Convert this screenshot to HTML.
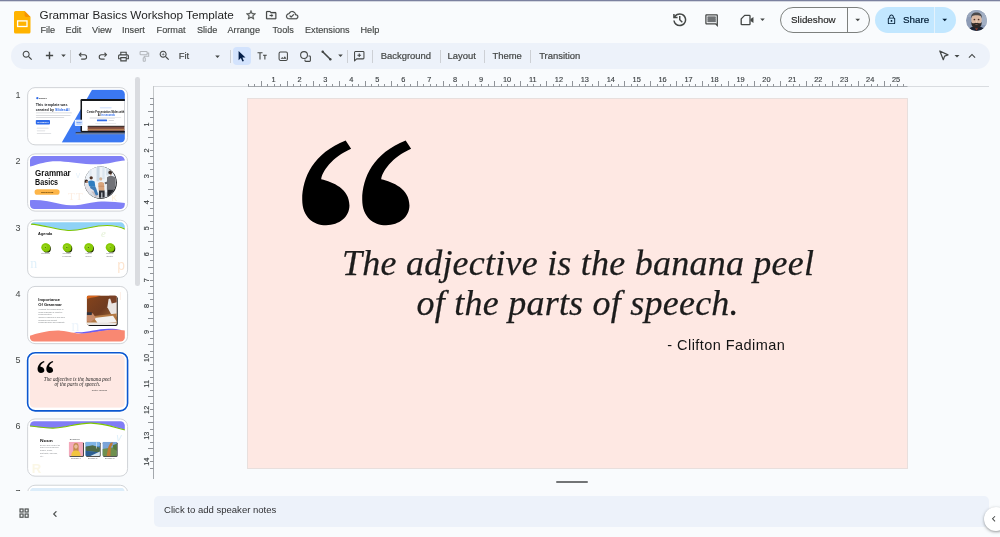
<!DOCTYPE html>
<html lang="en">
<head>
<meta charset="utf-8">
<title>Grammar Basics Workshop Template - Google Slides</title>
<style>
*{box-sizing:border-box;margin:0;padding:0}
html,body{width:1000px;height:537px;overflow:hidden}
body{position:relative;background:#f9fbfd;will-change:transform;font-family:"Liberation Sans",Arial,sans-serif;color:#1f1f1f}
.abs{position:absolute}
.t{position:absolute;white-space:nowrap;line-height:1}
#topline{left:0;top:0;width:1000px;height:2px;background:linear-gradient(#7b819f 0,#7b819f 50%,#d4d7e1 50%,#d4d7e1 100%)}
#title{left:39.5px;top:8.8px;font-size:11.72px;color:#1f1f1f;letter-spacing:.02px}
.menu{top:26.4px;font-size:9.15px;color:#444746;-webkit-text-stroke:.15px #444746}
#toolbar{left:11px;top:43px;width:978.5px;height:25.5px;border-radius:13px;background:#edf2fa}
.tbt{top:51.3px;font-size:9.45px;color:#444746;-webkit-text-stroke:.2px #444746}
.sep{position:absolute;top:49.5px;width:1px;height:13px;background:#cdd0d5}
svg{position:absolute;overflow:visible}
.num{font-size:9px;color:#444746;left:14px;width:8px;text-align:center}
#slide{left:247px;top:98px;width:661px;height:371px;background:#fee8e3;border:1px solid #e8dfdd}
.q{font-family:"Liberation Serif",serif;font-style:italic;font-size:36px;color:#1c1c1c;letter-spacing:.23px;-webkit-text-stroke:.25px #1c1c1c}
.qm{font-family:"Noto Serif CJK SC","Liberation Serif",serif;font-weight:900;font-size:248.2px;color:#000;transform:scaleX(1.0945);transform-origin:0 0}
#notes{left:154px;top:496px;width:834.5px;height:31px;border-radius:5px;background:#edf2fa}
</style>
</head>
<body>
<div id="topline" class="abs"></div>
<!-- header -->
<svg id="logo" style="left:14px;top:10.5px" width="16.5" height="22.5" viewBox="0 0 16.5 22.5"><path d="M1.600 0H10.600L16.500 5.900V20.900a1.600 1.600 0 0 1-1.600 1.600H1.600A1.600 1.600 0 0 1 0 20.900V1.600A1.600 1.600 0 0 1 1.600 0z" fill="#ffb300"/><path d="M10.600 0L16.500 5.900H12.200a1.600 1.600 0 0 1-1.600-1.600z" fill="#f59300"/><rect x="3.600" y="9.900" width="9.400" height="5.600" fill="none" stroke="#fff" stroke-width="1.300"/></svg>
<div id="title" class="t">Grammar Basics Workshop Template</div>
<svg style="left:244.50px;top:8.90px" width="12" height="12" viewBox="0 0 24 24"><path d="M22 9.240l-7.190-.62L12 2 9.190 8.630 2 9.240l5.460 4.730L5.820 21 12 17.270 18.180 21l-1.630-7.030L22 9.240zM12 15.400l-3.760 2.270 1-4.280-3.320-2.880 4.380-.38L12 6.100l1.710 4.040 4.380.38-3.320 2.880 1 4.280L12 15.400z" fill="#444746" stroke="#444746" stroke-width=".5"/></svg>
<svg style="left:264.80px;top:8.90px" width="12.4" height="12.4" viewBox="0 0 24 24"><path d="M20 6h-8l-2-2H4c-1.100 0-1.990.9-1.990 2L2 18c0 1.100.9 2 2 2h16c1.100 0 2-.9 2-2V8c0-1.100-.9-2-2-2zm0 12H4V6h5.170l2 2H20v10zm-7.500-2.500v-2H9v-2h3.500v-2l3.500 3-3.500 3z" fill="#444746" stroke="#444746" stroke-width=".4"/></svg>
<svg style="left:285.60px;top:9.10px" width="12.4" height="12.4" viewBox="0 0 24 24"><path d="M19.350 10.040C18.670 6.590 15.640 4 12 4 9.110 4 6.600 5.640 5.350 8.040 2.340 8.360 0 10.910 0 14c0 3.310 2.690 6 6 6h13c2.760 0 5-2.240 5-5 0-2.640-2.050-4.780-4.650-4.960zM19 18H6c-2.210 0-4-1.790-4-4 0-2.050 1.530-3.760 3.560-3.970l1.070-.11.5-.95C8.080 7.140 9.940 6 12 6c2.620 0 4.880 1.860 5.390 4.430l.3 1.500 1.530.11c1.560.1 2.780 1.410 2.780 2.960 0 1.650-1.350 3-3 3zm-9-3.820l-2.090-2.090L6.500 13.500 10 17l6.010-6.010-1.410-1.410z" fill="#444746" stroke="#444746" stroke-width=".3"/></svg>
<div class="t menu" style="left:40.4px">File</div>
<div class="t menu" style="left:65.6px">Edit</div>
<div class="t menu" style="left:92px">View</div>
<div class="t menu" style="left:122px">Insert</div>
<div class="t menu" style="left:156.6px">Format</div>
<div class="t menu" style="left:197px">Slide</div>
<div class="t menu" style="left:227.5px">Arrange</div>
<div class="t menu" style="left:272.5px">Tools</div>
<div class="t menu" style="left:305px">Extensions</div>
<div class="t menu" style="left:360.5px">Help</div>
<svg style="left:670.55px;top:11.15px" width="17.5" height="17.5" viewBox="0 0 24 24"><path d="M12 21q-3.45 0-6.012-2.287T3.05 13H5.1q.35 2.6 2.313 4.3T12 19q2.925 0 4.963-2.037T19 12t-2.037-4.963T12 5q-1.725 0-3.225.8T6.25 8H9v2H3V4h2v2.350q1.275-1.600 3.113-2.475T12 3q1.875 0 3.513.713t2.850 1.924 1.925 2.850T21 12t-.712 3.513-1.925 2.850-2.850 1.925T12 21m2.800-4.800L11 12.400V7h2v4.600l3.200 3.200z" fill="#444746"/></svg>
<svg style="left:704.00px;top:12.70px" width="15.2" height="15.2" viewBox="0 0 24 24"><path d="M21.990 4c0-1.100-.89-2-1.990-2H4c-1.100 0-2 .9-2 2v12c0 1.100.9 2 2 2h14l4 4-.010-18zM20 4v13.170L18.830 16H4V4h16zM6 12h12v2H6zm0-3h12v2H6zm0-3h12v2H6z" fill="#444746"/><rect x="5.500" y="5.500" width="13" height="9" fill="#6f7275"/></svg>
<svg style="left:738.60px;top:12.40px" width="16" height="16" viewBox="0 0 24 24"><path d="M8.500 5.100H15.500a1 1 0 0 1 1 1V17.900a1 1 0 0 1-1 1H4.300a1 1 0 0 1-1-1V10.300z" fill="none" stroke="#444746" stroke-width="2" stroke-linejoin="round"/><path d="M17.300 10.600L21.700 7.400v9.200l-4.400-3.200z" fill="#444746"/></svg>
<svg style="left:756.90px;top:14.40px" width="11" height="11" viewBox="0 0 24 24"><path d="M7 10l5 5 5-5z" fill="#444746"/></svg>
<div class="abs" style="left:780px;top:7px;width:89.5px;height:26px;border:1px solid #7d807e;border-radius:14px"></div>
<div class="abs" style="left:846.5px;top:7.5px;width:1px;height:25px;background:#7d807e"></div>
<div class="t" style="left:791px;top:15.3px;font-size:9.8px;color:#1f1f1f;-webkit-text-stroke:.15px #1f1f1f">Slideshow</div>
<svg style="left:851.55px;top:14.25px" width="11.5" height="11.5" viewBox="0 0 24 24"><path d="M7 10l5 5 5-5z" fill="#444746"/></svg>
<div class="abs" style="left:875px;top:7px;width:80.5px;height:26px;border-radius:13px;background:#c2e7ff"></div>
<div class="abs" style="left:934px;top:7px;width:1px;height:26px;background:#e4f2fc"></div>
<svg style="left:886.00px;top:14.30px" width="11" height="11" viewBox="0 0 24 24"><path d="M18 8h-1V6c0-2.760-2.240-5-5-5S7 3.240 7 6v2H6c-1.100 0-2 .9-2 2v10c0 1.100.9 2 2 2h12c1.100 0 2-.9 2-2V10c0-1.100-.9-2-2-2zM9 6c0-1.660 1.340-3 3-3s3 1.340 3 3v2H9V6zm9 14H6V10h12v10zm-6-3c1.100 0 2-.9 2-2s-.9-2-2-2-2 .9-2 2 .9 2 2 2z" fill="#001d35"/></svg>
<div class="t" style="left:903px;top:15.3px;font-size:9.8px;color:#001d35;-webkit-text-stroke:.2px #001d35">Share</div>
<svg style="left:938.85px;top:14.25px" width="11.5" height="11.5" viewBox="0 0 24 24"><path d="M7 10l5 5 5-5z" fill="#001d35"/></svg>
<svg style="left:966px;top:9.7px" width="21" height="21" viewBox="0 0 21 21"><defs><clipPath id="avc"><circle cx="10.5" cy="10.5" r="10.5"/></clipPath></defs><circle cx="10.5" cy="10.5" r="11.2" fill="#fff"/><g clip-path="url(#avc)"><rect width="21" height="21" fill="#8e9cb6"/><rect x="0" y="0" width="21" height="7" fill="#9aa7bd"/><rect x="14" y="3" width="7" height="12" fill="#a3afc3"/><path d="M2.500 21c.5-3.300 3-4.400 8-4.400s7.500 1.100 8 4.400z" fill="#1b2334"/><path d="M9 17.800h3l-1.500 3.200z" fill="#8a3a2a"/><ellipse cx="10.500" cy="10" rx="5.200" ry="6.400" fill="#dbb9a2"/><path d="M5 8.600c-.4-4.400 2.300-6.200 5.500-6.200s5.900 1.800 5.500 6.200c-.5-2.100-1.300-3.300-5.500-3.300s-5 1.200-5.500 3.300z" fill="#4a494b"/><path d="M5.300 12c.5 1.100 1.400 1.500 2.600 1.300 1.200-.7 4-.7 5.200 0 1.200.2 2.100-.2 2.600-1.300.2 3.700-1.600 6.200-5.200 6.200s-5.400-2.500-5.200-6.200z" fill="#2e2826"/><path d="M8.800 14.300q1.700-.5 3.400 0-.3.700-1.700.7t-1.700-.7z" fill="#7d5a50"/><circle cx="8.400" cy="9.500" r=".85" fill="#4a2e26"/><circle cx="12.600" cy="9.500" r=".85" fill="#4a2e26"/><path d="M10 10.500h1v2.200h-1z" fill="#e8cdb8"/></g></svg>
<!-- toolbar -->
<div id="toolbar" class="abs"></div>
<svg style="left:21.30px;top:49.30px" width="13" height="13" viewBox="0 0 24 24"><path d="M15.5 14h-.79l-.28-.27C15.41 12.59 16 11.11 16 9.5 16 5.91 13.09 3 9.5 3S3 5.91 3 9.5 5.91 16 9.5 16c1.61 0 3.09-.59 4.23-1.57l.27.28v.79l5 4.99L20.49 19l-4.99-5zm-6 0C7.01 14 5 11.99 5 9.5S7.01 5 9.5 5 14 7.01 14 9.5 11.99 14 9.5 14z" fill="#444746"/></svg>
<svg style="left:43.00px;top:49.30px" width="13" height="13" viewBox="0 0 24 24"><path d="M12 5.300V18.700M5.300 12H18.700" stroke="#444746" stroke-width="2.600" fill="none"/></svg>
<svg style="left:58.20px;top:50.20px" width="11" height="11" viewBox="0 0 24 24"><path d="M7 10l5 5 5-5z" fill="#444746"/></svg>
<svg style="left:77.20px;top:50.30px" width="11.8" height="11.8" viewBox="0 0 24 24"><path d="M5.500 9.500H15a4.500 4.500 0 0 1 0 9H8.500" fill="none" stroke="#444746" stroke-width="2.200"/><path d="M8.700 5.600L4.800 9.500l3.900 3.900" fill="none" stroke="#444746" stroke-width="2.200"/></svg>
<svg style="left:96.80px;top:50.30px" width="11.8" height="11.8" viewBox="0 0 24 24"><g transform="translate(24 0) scale(-1 1)"><path d="M5.500 9.500H15a4.500 4.500 0 0 1 0 9H8.500" fill="none" stroke="#444746" stroke-width="2.200"/><path d="M8.700 5.600L4.800 9.500l3.900 3.900" fill="none" stroke="#444746" stroke-width="2.200"/></g></svg>
<svg style="left:117.20px;top:49.60px" width="13" height="13" viewBox="0 0 24 24"><path d="M19 8h-1V3H6v5H5c-1.66 0-3 1.34-3 3v6h4v4h12v-4h4v-6c0-1.66-1.34-3-3-3zM8 5h8v3H8V5zm8 14H8v-4h8v4zm4-4h-2v-2H6v2H4v-4c0-.55.45-1 1-1h14c.55 0 1 .45 1 1v4zM18 10.500a1 1 0 1 0 0 2 1 1 0 0 0 0-2z" fill="#444746"/></svg>
<svg style="left:137.75px;top:50.05px" width="12.5" height="12.5" viewBox="0 0 24 24"><rect x="4" y="3" width="13.500" height="6" rx="1.500" fill="none" stroke="#b3b7bc" stroke-width="2"/><path d="M17.500 6H20.500V12H12V15" fill="none" stroke="#b3b7bc" stroke-width="2"/><rect x="10" y="15" width="4" height="6.500" rx="1" fill="none" stroke="#b3b7bc" stroke-width="2"/></svg>
<svg style="left:158.30px;top:49.40px" width="13" height="13" viewBox="0 0 24 24"><path d="M15.5 14h-.79l-.28-.27C15.41 12.59 16 11.11 16 9.5 16 5.91 13.09 3 9.5 3S3 5.91 3 9.5 5.91 16 9.5 16c1.61 0 3.09-.59 4.23-1.57l.27.28v.79l5 4.99L20.49 19l-4.99-5zm-6 0C7.01 14 5 11.99 5 9.5S7.01 5 9.5 5 14 7.01 14 9.5 11.99 14 9.5 14zm.5-7H9v2H7v1h2v2h1v-2h2V9h-2z" fill="#444746"/></svg>
<div class="t tbt" style="left:178.7px">Fit</div>
<svg style="left:212.20px;top:50.50px" width="11" height="11" viewBox="0 0 24 24"><path d="M7 10l5 5 5-5z" fill="#444746"/></svg>
<div class="abs" style="left:232.5px;top:46.5px;width:18.5px;height:18.5px;border-radius:4px;background:#d3e3fd"></div>
<svg style="left:235.55px;top:49.95px" width="12.5" height="12.5" viewBox="0 0 24 24"><path d="M5 2V19.500L9.300 15.400 12.300 22.300 15.200 21 12.200 14.300H18.200Z" fill="#041e49"/></svg>
<svg style="left:255.80px;top:50.20px" width="12" height="12" viewBox="0 0 24 24"><path d="M3 5.500H13M8 5.500V19M14 10.500H21.500M17.750 10.500V19" fill="none" stroke="#444746" stroke-width="2.200"/></svg>
<svg style="left:276.75px;top:49.75px" width="12.5" height="12.5" viewBox="0 0 24 24"><rect x="4" y="4" width="16" height="16" rx="2.500" fill="none" stroke="#444746" stroke-width="2"/><path d="M7 17l3-3.800 2.100 2.600 3-3.900L18.200 17z" fill="#444746"/></svg>
<svg style="left:298.50px;top:49.70px" width="13" height="13" viewBox="0 0 24 24"><circle cx="9.300" cy="9.300" r="6.300" fill="none" stroke="#444746" stroke-width="2"/><path d="M17.500 11h2a1.500 1.500 0 0 1 1.500 1.500v7a1.500 1.500 0 0 1-1.500 1.500h-7a1.500 1.500 0 0 1-1.500-1.500V17.500" fill="none" stroke="#444746" stroke-width="2"/></svg>
<svg style="left:319.50px;top:49.40px" width="13" height="13" viewBox="0 0 24 24"><path d="M5 5L19 19" stroke="#444746" stroke-width="3" stroke-linecap="round"/><circle cx="5" cy="5" r="2.300" fill="#444746"/><circle cx="19" cy="19" r="2.300" fill="#444746"/></svg>
<svg style="left:334.50px;top:49.90px" width="11" height="11" viewBox="0 0 24 24"><path d="M7 10l5 5 5-5z" fill="#444746"/></svg>
<svg style="left:353.25px;top:50.05px" width="12.5" height="12.5" viewBox="0 0 24 24"><path d="M3 4.500a1.500 1.500 0 0 1 1.500-1.500h15a1.500 1.500 0 0 1 1.500 1.500v11a1.500 1.500 0 0 1-1.500 1.500H7l-4 4z" fill="none" stroke="#444746" stroke-width="2" stroke-linejoin="round"/><path d="M12 6.500v7M8.500 10h7" stroke="#444746" stroke-width="2.200" fill="none"/></svg>
<div class="t tbt" style="left:380.7px">Background</div>
<div class="t tbt" style="left:447.5px">Layout</div>
<div class="t tbt" style="left:492.5px">Theme</div>
<div class="t tbt" style="left:539.2px">Transition</div>
<div class="sep" style="left:70px"></div>
<div class="sep" style="left:229.5px"></div>
<div class="sep" style="left:346.5px"></div>
<div class="sep" style="left:372px"></div>
<div class="sep" style="left:440px"></div>
<div class="sep" style="left:483.7px"></div>
<div class="sep" style="left:530px"></div>
<svg style="left:936.95px;top:49.25px" width="13.5" height="13.5" viewBox="0 0 24 24"><path d="M5 3.500l14.500 7-6 2.200-2.300 6.300z" fill="none" stroke="#444746" stroke-width="2.200" stroke-linejoin="round"/></svg>
<svg style="left:950.90px;top:49.90px" width="12" height="12" viewBox="0 0 24 24"><path d="M7 10l5 5 5-5z" fill="#444746"/></svg>
<svg style="left:964.50px;top:48.80px" width="14" height="14" viewBox="0 0 24 24"><path d="M12 8l-6 6 1.410 1.410L12 10.830l4.590 4.580L18 14z" fill="#444746"/></svg>
<!-- filmstrip -->
<svg id="film" style="left:0;top:76px;overflow:hidden" width="142" height="414.9" viewBox="0 76 142 414.9" font-family="Liberation Sans, sans-serif">
<text x="18" y="98.03" font-size="9" fill="#444746" text-anchor="middle">1</text>
<rect x="27.63" y="87.63" width="99.95" height="57.2" rx="7.4" fill="#fff" stroke="#d0d3d7" stroke-width="1"/>
<clipPath id="tc1"><rect x="29.9" y="89.83" width="94.9" height="52.9" rx="4.4"/></clipPath><g clip-path="url(#tc1)"><rect x="29.9" y="89.83" width="94.9" height="52.9" fill="#fff"/><g transform="translate(20 82) scale(0.12658)"><path d="M570 60H800Q832 60 832 92V445Q832 477 800 477H330Z" fill="#3b78f2"/><rect x="478" y="134" width="380" height="262" rx="10" fill="#15171a"/><rect x="490" y="150" width="360" height="236" fill="#fff"/><rect x="440" y="397" width="420" height="9" fill="#2b2d31"/><rect x="440" y="406" width="420" height="7" fill="#8d9096"/><rect x="535" y="350" width="290" height="36" fill="#7d4a3c"/><rect x="535" y="346" width="290" height="8" fill="#2d2320"/><rect x="535" y="370" width="290" height="8" fill="#c08a5a"/><rect x="630" y="198" width="95" height="12" rx="6" fill="#dbe7fd"/><text x="676" y="242" font-size="21" font-weight="bold" text-anchor="middle" fill="#111" textLength="296" lengthAdjust="spacingAndGlyphs">Create Presentation Slides with</text><text x="615" y="266" font-size="21" font-weight="bold" fill="#111">AI <tspan fill="#2f6bea">in seconds</tspan></text><rect x="550" y="276.0" width="250" height="4" rx="2.0" fill="#d5d7db"/><rect x="550" y="286.0" width="200" height="4" rx="2.0" fill="#d5d7db"/><rect x="608" y="297" width="80" height="14" rx="3" fill="#2f6bea"/><rect x="700" y="301" width="42" height="5" rx="2" fill="#c9ccd1"/><rect x="595" y="325.0" width="165" height="4" rx="2.0" fill="#d5d7db"/><rect x="433" y="298" width="66" height="50" rx="9" fill="#fff"/><rect x="438" y="303" width="56" height="40" rx="6" fill="#cfe0fc"/><text x="466" y="322" font-size="14" font-weight="bold" text-anchor="middle" fill="#2f6bea">Slides</text><rect x="450" y="329" width="32" height="5" rx="2" fill="#8fb2f4"/><circle cx="137" cy="128" r="9" fill="#2f6bea"/><text x="150" y="134" font-size="16" font-weight="bold" fill="#222">SlidesAI</text><text x="125" y="188" font-size="31" font-weight="bold" fill="#1d1f23" textLength="250" lengthAdjust="spacingAndGlyphs">This template was</text><text x="125" y="227" font-size="31" font-weight="bold" fill="#1d1f23" textLength="266" lengthAdjust="spacingAndGlyphs">created by <tspan fill="#2f6bea">SlidesAI</tspan></text><rect x="125" y="241.0" width="285" height="6" rx="3.0" fill="#cfd1d5"/><rect x="125" y="260.0" width="275" height="6" rx="3.0" fill="#cfd1d5"/><rect x="125" y="278.0" width="225" height="6" rx="3.0" fill="#cfd1d5"/><rect x="125" y="300" width="112" height="35" rx="7" fill="#2f6bea"/><text x="181" y="324" font-size="17" font-weight="bold" fill="#fff" text-anchor="middle">by SlidesAI</text><rect x="132" y="362.0" width="95" height="6" rx="3.0" fill="#d6d8dc"/><rect x="132" y="383.0" width="68" height="6" rx="3.0" fill="#d6d8dc"/><rect x="132" y="405.0" width="115" height="6" rx="3.0" fill="#d6d8dc"/></g></g>
<text x="18" y="164.30" font-size="9" fill="#444746" text-anchor="middle">2</text>
<rect x="27.63" y="153.90" width="99.95" height="57.2" rx="7.4" fill="#fff" stroke="#d0d3d7" stroke-width="1"/>
<clipPath id="tc2"><rect x="29.9" y="156.10" width="94.9" height="52.9" rx="4.4"/></clipPath><g clip-path="url(#tc2)"><rect x="29.9" y="156.10" width="94.9" height="52.9" fill="#fff"/><g transform="translate(20 148) scale(0.12658)"><path d="M78 60H832V98C760 100 700 135 560 128C430 122 330 95 230 108C160 117 110 140 78 147Z" fill="#8080f6"/><path d="M78 412C150 405 250 425 330 445C400 462 470 450 560 432C650 415 750 425 832 435V484H78Z" fill="#8080f6"/><text x="380" y="410" font-size="90" fill="#fdeee2" font-family="Liberation Serif, serif">T</text><text x="440" y="410" font-size="90" fill="#fdeee2" font-family="Liberation Serif, serif">T</text><text x="720" y="420" font-size="70" fill="#fdf0dc">K</text><text x="440" y="235" font-size="70" fill="#e8f3fb">v</text><text x="119" y="222" font-size="65" font-weight="bold" fill="#111" textLength="282" lengthAdjust="spacingAndGlyphs">Grammar</text><text x="119" y="293" font-size="65" font-weight="bold" fill="#111" textLength="182" lengthAdjust="spacingAndGlyphs">Basics</text><rect x="115" y="325" width="198" height="45" rx="22.500" fill="#fdb548"/><text x="214" y="355" font-size="20" font-style="italic" font-weight="bold" fill="#5b3a00" text-anchor="middle">Workshop</text><g transform="translate(474 110.600) scale(0.5896)"><defs><clipPath id="ph2"><circle cx="272" cy="272" r="210"/></clipPath></defs><circle cx="277" cy="276" r="217" fill="#16171a"/><g clip-path="url(#ph2)"><rect x="40" y="40" width="470" height="470" fill="#eef3f8"/><rect x="222" y="50" width="40" height="210" fill="#c9d7e4"/><rect x="300" y="50" width="30" height="180" fill="#dbe6ef"/><rect x="125" y="60" width="30" height="150" fill="#e0e9f1"/><rect x="350" y="60" width="40" height="120" fill="#d5e0ea"/><rect x="40" y="405" width="470" height="110" fill="#d6dbe1"/><circle cx="84" cy="258" r="24" fill="#3b2a25"/><circle cx="95" cy="268" r="14" fill="#c79a82"/><path d="M62 300Q100 280 150 312L215 395L240 455L200 470L150 410L75 400Z" fill="#e3e2e8"/><path d="M150 395L215 395L245 460L205 470Z" fill="#c9c0c4"/><circle cx="150" cy="212" r="22" fill="#4f3428"/><path d="M108 262Q150 232 196 262L206 335L122 325Z" fill="#2e7dc0"/><path d="M140 318L212 338L245 440L212 450L182 380L135 350Z" fill="#3f7cb6"/><circle cx="278" cy="224" r="21" fill="#c8b39b"/><circle cx="281" cy="233" r="14" fill="#dbb397"/><path d="M244 282Q282 254 322 282L328 385L250 385Z" fill="#d9a57c"/><path d="M248 318h76v14h-76z" fill="#c89068"/><path d="M255 383H330V480H300V410H285V480H255Z" fill="#2c2e35"/><circle cx="405" cy="140" r="25" fill="#3d2f29"/><path d="M398 150a16 18 0 0 0 26 6l-2 20h-20z" fill="#a07a62"/><path d="M362 205Q412 160 478 212L478 372L360 372Z" fill="#717277"/><path d="M330 272L372 262L375 292L335 298Z" fill="#6a6b70"/><rect x="366" y="370" width="108" height="130" fill="#23252b"/></g></g></g></g>
<text x="18" y="230.57" font-size="9" fill="#444746" text-anchor="middle">3</text>
<rect x="27.63" y="220.17" width="99.95" height="57.2" rx="7.4" fill="#fff" stroke="#d0d3d7" stroke-width="1"/>
<clipPath id="tc3"><rect x="29.9" y="222.37" width="94.9" height="52.9" rx="4.4"/></clipPath><g clip-path="url(#tc3)"><rect x="29.9" y="222.37" width="94.9" height="52.9" fill="#fff"/><g transform="translate(20 214) scale(0.12658)"><text x="640" y="185" font-size="85" fill="#e4f1d6" font-style="italic" font-family="Liberation Serif, serif">e</text><text x="80" y="430" font-size="110" fill="#e1f1fb" font-family="Liberation Serif, serif">n</text><text x="768" y="445" font-size="110" fill="#fde6d2">p</text><path d="M78 60H832V118C760 85 700 85 620 95C520 110 450 135 380 130C280 122 180 85 78 80Z" fill="#8fd2f6"/><path d="M86 80C180 85 280 122 380 130C450 135 520 110 620 95C700 85 760 85 830 120" fill="none" stroke="#7fc600" stroke-width="9"/><text x="143" y="168" font-size="31" font-weight="bold" fill="#111" textLength="112" lengthAdjust="spacingAndGlyphs">Agenda</text><circle cx="213" cy="274" r="31" fill="#1f2b00"/><path d="M173 262a33 33 0 1 1 36 36q-30 2-36-36z" fill="#86c905"/><circle cx="201" cy="264" r="33" fill="#86c905"/><circle cx="197" cy="258" r="16" fill="#98d41c"/><text x="201" y="271" font-size="18" font-weight="bold" text-anchor="middle" fill="#1b2a00">1</text><text x="201" y="318" font-size="13.500" text-anchor="middle" fill="#6b6e72">Introduction</text><circle cx="382" cy="274" r="31" fill="#1f2b00"/><path d="M342 262a33 33 0 1 1 36 36q-30 2-36-36z" fill="#86c905"/><circle cx="370" cy="264" r="33" fill="#86c905"/><circle cx="366" cy="258" r="16" fill="#98d41c"/><text x="370" y="271" font-size="18" font-weight="bold" text-anchor="middle" fill="#1b2a00">2</text><text x="370" y="318" font-size="13.500" text-anchor="middle" fill="#6b6e72">Importance</text><text x="370" y="338" font-size="13.500" text-anchor="middle" fill="#6b6e72">of Grammar</text><circle cx="553" cy="274" r="31" fill="#1f2b00"/><path d="M513 262a33 33 0 1 1 36 36q-30 2-36-36z" fill="#86c905"/><circle cx="541" cy="264" r="33" fill="#86c905"/><circle cx="537" cy="258" r="16" fill="#98d41c"/><text x="541" y="271" font-size="18" font-weight="bold" text-anchor="middle" fill="#1b2a00">3</text><text x="541" y="318" font-size="13.500" text-anchor="middle" fill="#6b6e72">Parts of</text><text x="541" y="338" font-size="13.500" text-anchor="middle" fill="#6b6e72">Speech</text><circle cx="722" cy="274" r="31" fill="#1f2b00"/><path d="M682 262a33 33 0 1 1 36 36q-30 2-36-36z" fill="#86c905"/><circle cx="710" cy="264" r="33" fill="#86c905"/><circle cx="706" cy="258" r="16" fill="#98d41c"/><text x="710" y="271" font-size="18" font-weight="bold" text-anchor="middle" fill="#1b2a00">4</text><text x="710" y="318" font-size="13.500" text-anchor="middle" fill="#6b6e72">Sentence</text><text x="710" y="338" font-size="13.500" text-anchor="middle" fill="#6b6e72">Structure</text></g></g>
<text x="18" y="296.84" font-size="9" fill="#444746" text-anchor="middle">4</text>
<rect x="27.63" y="286.44" width="99.95" height="57.2" rx="7.4" fill="#fff" stroke="#d0d3d7" stroke-width="1"/>
<clipPath id="tc4"><rect x="29.9" y="288.64" width="94.9" height="52.9" rx="4.4"/></clipPath><g clip-path="url(#tc4)"><rect x="29.9" y="288.64" width="94.9" height="52.9" fill="#fff"/><g transform="translate(20 280) scale(0.12658)"><text x="405" y="400" font-size="130" fill="#eef5fc" font-family="Liberation Serif, serif">n</text><text x="785" y="155" font-size="80" fill="#fdeee4">l</text><text x="145" y="169" font-size="30" font-weight="bold" fill="#111" textLength="172" lengthAdjust="spacingAndGlyphs">Importance</text><text x="145" y="204" font-size="30" font-weight="bold" fill="#111" textLength="185" lengthAdjust="spacingAndGlyphs">Of Grammar</text><text x="145" y="237" font-size="15" fill="#7d8084" textLength="198" lengthAdjust="spacingAndGlyphs">Highlight the significance of</text><text x="145" y="258" font-size="15" fill="#7d8084" textLength="190" lengthAdjust="spacingAndGlyphs">good grammar in effective</text><text x="145" y="278" font-size="15" fill="#7d8084" textLength="108" lengthAdjust="spacingAndGlyphs">communication.</text><text x="145" y="300" font-size="15" fill="#7d8084" textLength="210" lengthAdjust="spacingAndGlyphs">Include examples of how poor</text><text x="145" y="321" font-size="15" fill="#7d8084" textLength="148" lengthAdjust="spacingAndGlyphs">grammar can impact</text><text x="145" y="342" font-size="15" fill="#7d8084" textLength="210" lengthAdjust="spacingAndGlyphs">comprehension and credibility.</text><rect x="536" y="131" width="236" height="232" rx="16" fill="#121212"/><defs><clipPath id="ph4"><rect x="527" y="122" width="238" height="233" rx="15"/></clipPath><linearGradient id="g4" x1="0" y1="0" x2="1" y2="1"><stop offset="0" stop-color="#86441c"/><stop offset=".5" stop-color="#6f3b20"/><stop offset="1" stop-color="#a9733f"/></linearGradient></defs><g clip-path="url(#ph4)"><rect x="527" y="122" width="238" height="233" fill="url(#g4)"/><path d="M527 122H640L600 135L560 140L527 150Z" fill="#d9661c"/><path d="M700 150L765 130V290L720 270L690 215Z" fill="#e9e4e2"/><path d="M705 122H765V175L725 185Z" fill="#7a4228"/><path d="M527 290L765 265V355H527Z" fill="#b47a45"/><path d="M585 300L735 282L765 330L620 350Z" fill="#f3f1ef"/><path d="M527 335L765 335V355H527Z" fill="#e9e6e3"/><path d="M527 275L575 262L600 300L560 330L527 325Z" fill="#c98d6c"/><rect x="527" y="255" width="40" height="22" fill="#2f3440"/></g><path d="M425 412C520 422 600 386 700 385C745 385 775 388 800 394C700 396 620 410 540 422C500 427 460 422 425 412Z" fill="#6a5cf6"/><path d="M78 440C130 425 220 395 320 400C400 405 430 425 500 422C580 418 650 398 720 394C770 392 800 395 832 400V490H78Z" fill="#f98872"/></g></g>
<text x="18" y="363.11" font-size="9" fill="#444746" text-anchor="middle">5</text>
<rect x="27.63" y="352.71" width="99.95" height="58.2" rx="7.6" fill="#fff" stroke="#fff" stroke-width="3.4"/>
<rect x="27.63" y="352.71" width="99.95" height="58.2" rx="7.6" fill="#fff" stroke="#0b57d0" stroke-width="1.6"/>
<clipPath id="tc5"><rect x="29.9" y="354.91" width="94.9" height="52.9" rx="4.4"/></clipPath><g clip-path="url(#tc5)"><rect x="29.9" y="354.91" width="94.9" height="52.9" fill="#fee8e3"/><g transform="translate(29.9 354.91) scale(0.14401 0.14278)"><g font-family="Liberation Serif, serif"><text transform="translate(-146.5 259.500) scale(1.0945 1)" font-family="Noto Serif CJK SC, Liberation Serif, serif" font-weight="900" font-size="248.200" fill="#000">‘</text><text transform="translate(-86.8 259.500) scale(1.0945 1)" font-family="Noto Serif CJK SC, Liberation Serif, serif" font-weight="900" font-size="248.200" fill="#000">‘</text><text x="96.500" y="180" font-style="italic" font-size="36" fill="#1c1c1c" textLength="467" lengthAdjust="spacing">The adjective is the banana peel</text><text x="170" y="219.500" font-style="italic" font-size="36" fill="#1c1c1c" textLength="317.500" lengthAdjust="spacing">of the parts of speech.</text></g><text x="419" y="252" font-size="14.300" fill="#333" textLength="118" lengthAdjust="spacing">- Clifton Fadiman</text></g></g>
<text x="18" y="429.38" font-size="9" fill="#444746" text-anchor="middle">6</text>
<rect x="27.63" y="418.98" width="99.95" height="57.2" rx="7.4" fill="#fff" stroke="#d0d3d7" stroke-width="1"/>
<clipPath id="tc6"><rect x="29.9" y="421.18" width="94.9" height="52.9" rx="4.4"/></clipPath><g clip-path="url(#tc6)"><rect x="29.9" y="421.18" width="94.9" height="52.9" fill="#fff"/><g transform="translate(20 412) scale(0.15456)"><text x="76" y="398" font-size="85" font-weight="bold" fill="#fbf7e6">R</text><text x="622" y="185" font-size="70" fill="#dff0fa" font-style="italic">v</text><path d="M60 55H685V116C620 105 560 75 460 72C380 70 300 100 230 104C170 107 110 95 60 90Z" fill="#807cf6"/><path d="M64 91C110 95 170 107 230 104C300 100 380 70 460 72C560 75 620 105 682 116" fill="none" stroke="#7fc600" stroke-width="7"/><text x="130" y="196" font-size="28" font-weight="bold" fill="#111" textLength="82" lengthAdjust="spacingAndGlyphs">Noun</text><text x="130" y="217" font-size="12" fill="#85888c" textLength="130" lengthAdjust="spacingAndGlyphs">Define and explain the</text><text x="130" y="236" font-size="12" fill="#85888c" textLength="122" lengthAdjust="spacingAndGlyphs">main types of speech:</text><text x="130" y="254" font-size="12" fill="#85888c" textLength="82" lengthAdjust="spacingAndGlyphs">proper, name,</text><text x="130" y="272" font-size="12" fill="#85888c" textLength="112" lengthAdjust="spacingAndGlyphs">abstracts, adverbs,</text><text x="130" y="289" font-size="12" fill="#85888c" textLength="26" lengthAdjust="spacingAndGlyphs">etc...</text><text x="322" y="180" font-size="12" fill="#3a3c40" textLength="64" lengthAdjust="spacingAndGlyphs">Examples</text><rect x="319" y="197" width="94" height="92" rx="6" fill="#1a1a1a"/><rect x="427" y="197" width="94" height="92" rx="6" fill="#1a1a1a"/><rect x="537" y="197" width="94" height="92" rx="6" fill="#1a1a1a"/><defs><clipPath id="p6a"><rect x="315" y="193" width="94" height="92" rx="6"/></clipPath><clipPath id="p6b"><rect x="423" y="193" width="94" height="92" rx="6"/></clipPath><clipPath id="p6c"><rect x="533" y="193" width="94" height="92" rx="6"/></clipPath></defs><g clip-path="url(#p6a)"><rect x="315" y="193" width="94" height="92" fill="#f3a9bb"/><path d="M345 222a17 22 0 0 1 34 0v32h-34z" fill="#c58b4e"/><ellipse cx="362" cy="224" rx="11" ry="14" fill="#e9bd9c"/><path d="M332 285c0-28 12-36 30-36s30 8 30 36z" fill="#f1c540"/></g><g clip-path="url(#p6b)"><rect x="423" y="193" width="94" height="92" fill="#4c8fd0"/><rect x="423" y="193" width="94" height="28" fill="#7fb4e6"/><path d="M423 225L470 215L517 232V262L423 250Z" fill="#4f6a46"/><path d="M423 250L517 262V285H423Z" fill="#2d5f93"/><path d="M455 285L517 255V285Z" fill="#d8e6ee"/><rect x="494" y="196" width="4" height="40" fill="#e8eef2"/></g><g clip-path="url(#p6c)"><rect x="533" y="193" width="94" height="92" fill="#7ba4d8"/><path d="M533 240L627 225V285H533Z" fill="#6f8f4e"/><path d="M560 285L572 225L585 200L600 196L598 212L588 228L585 285Z" fill="#c07a35"/><path d="M600 215L627 205V250L605 240Z" fill="#557a3c"/></g><text x="362" y="306" font-size="11" fill="#55585c" text-anchor="middle" textLength="60" lengthAdjust="spacingAndGlyphs">Example 1</text><text x="470" y="306" font-size="11" fill="#55585c" text-anchor="middle" textLength="60" lengthAdjust="spacingAndGlyphs">Example 2</text><text x="580" y="306" font-size="11" fill="#55585c" text-anchor="middle" textLength="60" lengthAdjust="spacingAndGlyphs">Example 3</text></g></g>
<text x="18" y="495.65" font-size="9" fill="#444746" text-anchor="middle">7</text>
<rect x="27.63" y="485.25" width="99.95" height="57.2" rx="7.4" fill="#fff" stroke="#d0d3d7" stroke-width="1"/>
<clipPath id="tc7"><rect x="29.9" y="487.45" width="94.9" height="52.9" rx="4.4"/></clipPath><g clip-path="url(#tc7)"><rect x="29.9" y="487.45" width="94.9" height="52.9" fill="#fff"/><rect x="29.9" y="488.05" width="94.9" height="12" fill="#dcedfa"/></g>
</svg>
<div class="abs" style="left:135.3px;top:76.5px;width:4.6px;height:209.5px;border-radius:2.3px;background:#dadce0"></div>
<!-- canvas -->
<div class="abs" style="left:153px;top:86px;width:836px;height:1px;background:#d9dce0"></div>
<div class="abs" style="left:153px;top:86px;width:1px;height:393px;background:#c4c7c9"></div>
<svg style="left:0;top:70px" width="1000" height="20" viewBox="0 70 1000 20" font-family="Liberation Sans, sans-serif" font-size="7.4" fill="#3c4043" stroke="#3c4043" stroke-width=".15" text-anchor="middle"><rect x="248" y="86" width="659.5" height="1" fill="#a4a8ad" stroke="none"/><path d="M248.50 84V86.5M254.50 84V86.5M261.50 81V86.5M267.50 84V86.5M274.50 84V86.5M280.50 84V86.5M287.50 81V86.5M293.50 84V86.5M300.50 84V86.5M306.50 84V86.5M313.50 81V86.5M319.50 84V86.5M326.50 84V86.5M332.50 84V86.5M339.50 81V86.5M345.50 84V86.5M352.50 84V86.5M358.50 84V86.5M365.50 81V86.5M371.50 84V86.5M378.50 84V86.5M384.50 84V86.5M391.50 81V86.5M397.50 84V86.5M404.50 84V86.5M410.50 84V86.5M417.50 81V86.5M423.50 84V86.5M430.50 84V86.5M436.50 84V86.5M443.50 81V86.5M449.50 84V86.5M456.50 84V86.5M462.50 84V86.5M468.50 81V86.5M475.50 84V86.5M481.50 84V86.5M488.50 84V86.5M494.50 81V86.5M501.50 84V86.5M507.50 84V86.5M514.50 84V86.5M520.50 81V86.5M527.50 84V86.5M533.50 84V86.5M540.50 84V86.5M546.50 81V86.5M553.50 84V86.5M559.50 84V86.5M566.50 84V86.5M572.50 81V86.5M579.50 84V86.5M585.50 84V86.5M592.50 84V86.5M598.50 81V86.5M605.50 84V86.5M611.50 84V86.5M618.50 84V86.5M624.50 81V86.5M631.50 84V86.5M637.50 84V86.5M644.50 84V86.5M650.50 81V86.5M657.50 84V86.5M663.50 84V86.5M670.50 84V86.5M676.50 81V86.5M682.50 84V86.5M689.50 84V86.5M695.50 84V86.5M702.50 81V86.5M708.50 84V86.5M715.50 84V86.5M721.50 84V86.5M728.50 81V86.5M734.50 84V86.5M741.50 84V86.5M747.50 84V86.5M754.50 81V86.5M760.50 84V86.5M767.50 84V86.5M773.50 84V86.5M780.50 81V86.5M786.50 84V86.5M793.50 84V86.5M799.50 84V86.5M806.50 81V86.5M812.50 84V86.5M819.50 84V86.5M825.50 84V86.5M832.50 81V86.5M838.50 84V86.5M845.50 84V86.5M851.50 84V86.5M858.50 81V86.5M864.50 84V86.5M871.50 84V86.5M877.50 84V86.5M884.50 81V86.5M890.50 84V86.5M897.50 84V86.5M903.50 84V86.5" stroke="#8f9398" stroke-width="1" fill="none"/><text x="273.5" y="82.4">1</text><text x="299.5" y="82.4">2</text><text x="325.4" y="82.4">3</text><text x="351.4" y="82.4">4</text><text x="377.3" y="82.4">5</text><text x="403.2" y="82.4">6</text><text x="429.2" y="82.4">7</text><text x="455.1" y="82.4">8</text><text x="481.1" y="82.4">9</text><text x="507.0" y="82.4">10</text><text x="532.9" y="82.4">11</text><text x="558.9" y="82.4">12</text><text x="584.8" y="82.4">13</text><text x="610.8" y="82.4">14</text><text x="636.7" y="82.4">15</text><text x="662.6" y="82.4">16</text><text x="688.6" y="82.4">17</text><text x="714.5" y="82.4">18</text><text x="740.5" y="82.4">19</text><text x="766.4" y="82.4">20</text><text x="792.3" y="82.4">21</text><text x="818.3" y="82.4">22</text><text x="844.2" y="82.4">23</text><text x="870.2" y="82.4">24</text><text x="896.1" y="82.4">25</text></svg>
<svg style="left:140px;top:86px" width="16" height="400" viewBox="140 86 16 400" font-family="Liberation Sans, sans-serif" font-size="7.4" fill="#3c4043" stroke="#3c4043" stroke-width=".15" text-anchor="middle"><rect x="153" y="98" width="1" height="381" fill="#a4a8ad" stroke="none"/><path d="M150 98.50H153.5M150 104.50H153.5M148 111.50H153.5M150 117.50H153.5M150 124.50H153.5M150 130.50H153.5M148 137.50H153.5M150 143.50H153.5M150 150.50H153.5M150 156.50H153.5M148 163.50H153.5M150 169.50H153.5M150 176.50H153.5M150 182.50H153.5M148 189.50H153.5M150 195.50H153.5M150 202.50H153.5M150 208.50H153.5M148 215.50H153.5M150 221.50H153.5M150 228.50H153.5M150 234.50H153.5M148 241.50H153.5M150 247.50H153.5M150 254.50H153.5M150 260.50H153.5M148 267.50H153.5M150 273.50H153.5M150 280.50H153.5M150 286.50H153.5M148 293.50H153.5M150 299.50H153.5M150 306.50H153.5M150 312.50H153.5M148 318.50H153.5M150 325.50H153.5M150 331.50H153.5M150 338.50H153.5M148 344.50H153.5M150 351.50H153.5M150 357.50H153.5M150 364.50H153.5M148 370.50H153.5M150 377.50H153.5M150 383.50H153.5M150 390.50H153.5M148 396.50H153.5M150 403.50H153.5M150 409.50H153.5M150 416.50H153.5M148 422.50H153.5M150 429.50H153.5M150 435.50H153.5M150 442.50H153.5M148 448.50H153.5M150 455.50H153.5M150 461.50H153.5M150 468.50H153.5" stroke="#8f9398" stroke-width="1" fill="none"/><text transform="translate(149.2 124.4) rotate(-90)">1</text><text transform="translate(149.2 150.4) rotate(-90)">2</text><text transform="translate(149.2 176.3) rotate(-90)">3</text><text transform="translate(149.2 202.3) rotate(-90)">4</text><text transform="translate(149.2 228.2) rotate(-90)">5</text><text transform="translate(149.2 254.1) rotate(-90)">6</text><text transform="translate(149.2 280.1) rotate(-90)">7</text><text transform="translate(149.2 306.0) rotate(-90)">8</text><text transform="translate(149.2 332.0) rotate(-90)">9</text><text transform="translate(149.2 357.9) rotate(-90)">10</text><text transform="translate(149.2 383.8) rotate(-90)">11</text><text transform="translate(149.2 409.8) rotate(-90)">12</text><text transform="translate(149.2 435.7) rotate(-90)">13</text><text transform="translate(149.2 461.7) rotate(-90)">14</text></svg>
<div id="slide" class="abs"></div>
<div class="t qm" style="left:102.0px;top:127.15px">‘</div>
<div class="t qm" style="left:161.7px;top:127.15px">‘</div>
<div class="t q" style="left:342px;top:245.4px">The adjective is the banana peel</div>
<div class="t q" style="left:416.6px;top:284.9px">of the parts of speech.</div>
<div class="t" id="author" style="left:667.3px;top:338.2px;font-size:14.5px;letter-spacing:.45px;color:#141414">- Clifton Fadiman</div>
<div class="abs" style="left:556px;top:480.5px;width:32px;height:2px;background:#727476;border-radius:1px"></div>
<div id="notes" class="abs"></div>
<div class="t" style="left:164px;top:505px;font-size:9.54px;color:#303134">Click to add speaker notes</div>
<svg style="left:17.90px;top:507.25px" width="12.2" height="12.2" viewBox="0 0 24 24"><path d="M3 3v8h8V3H3zm6 6H5V5h4v4zm-6 4v8h8v-8H3zm6 6H5v-4h4v4zm4-16v8h8V3h-8zm6 6h-4V5h4v4zm-6 4v8h8v-8h-8zm6 6h-4v-4h4v4z" fill="#444746" stroke="#444746" stroke-width=".25" stroke-linejoin="round"/></svg>
<svg style="left:49.15px;top:507.80px" width="12" height="12" viewBox="0 0 24 24"><path d="M15.410 7.410L14 6l-6 6 6 6 1.410-1.410L10.830 12z" fill="#444746" stroke="#444746" stroke-width=".4"/></svg>
<div class="abs" style="left:984px;top:506.5px;width:24px;height:24px;border-radius:12px;background:#fff;box-shadow:0 1px 2px rgba(60,64,67,.35),0 1px 3px 1px rgba(60,64,67,.15)"></div>
<svg style="left:987.65px;top:512.85px" width="11.5" height="11.5" viewBox="0 0 24 24"><path d="M15.410 7.410L14 6l-6 6 6 6 1.410-1.410L10.830 12z" fill="#444746"/></svg>
</body>
</html>
